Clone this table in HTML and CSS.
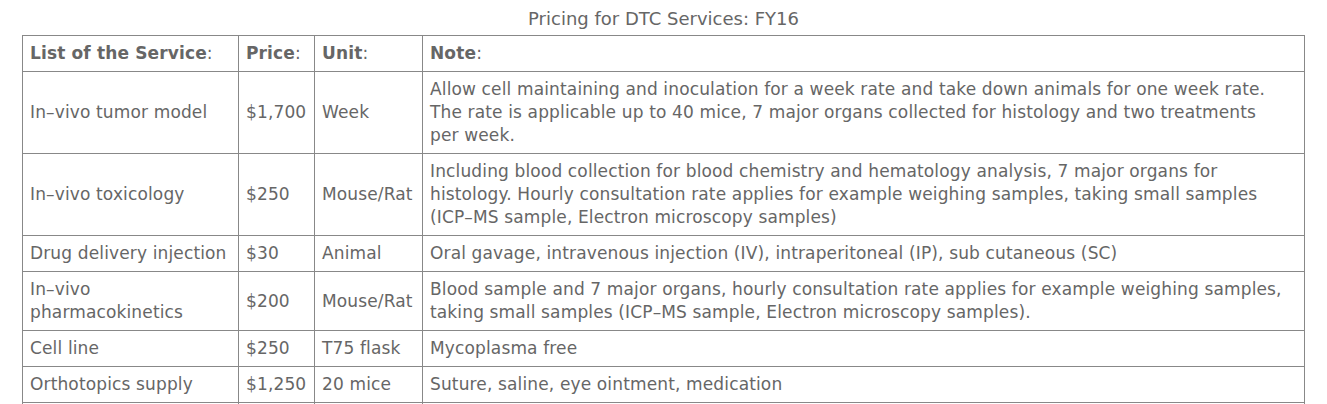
FILE: index.html
```html
<!DOCTYPE html>
<html>
<head>
<meta charset="utf-8">
<title>Pricing for DTC Services: FY16</title>
<link rel="stylesheet" href="styles.css">
</head>
<body>
<div class="page">
  <div class="title">Pricing for DTC Services: FY16</div>
  <table class="pricing">
    <colgroup>
      <col class="c-service">
      <col class="c-price">
      <col class="c-unit">
      <col class="c-note">
    </colgroup>
    <thead>
      <tr>
        <th><b>List of the Service</b>:</th>
        <th><b>Price</b>:</th>
        <th><b>Unit</b>:</th>
        <th><b>Note</b>:</th>
      </tr>
    </thead>
    <tbody>
      <tr>
        <td>In–vivo tumor model</td>
        <td>$1,700</td>
        <td>Week</td>
        <td>Allow cell maintaining and inoculation for a week rate and take down animals for one week rate. The rate is applicable up to 40 mice, 7 major organs collected for histology and two treatments per week.</td>
      </tr>
      <tr>
        <td>In–vivo toxicology</td>
        <td>$250</td>
        <td>Mouse/Rat</td>
        <td>Including blood collection for blood chemistry and hematology analysis, 7 major organs for histology. Hourly consultation rate applies for example weighing samples, taking small samples (ICP–MS sample, Electron microscopy samples)</td>
      </tr>
      <tr>
        <td>Drug delivery injection</td>
        <td>$30</td>
        <td>Animal</td>
        <td>Oral gavage, intravenous injection (IV), intraperitoneal (IP), sub cutaneous (SC)</td>
      </tr>
      <tr>
        <td>In–vivo pharmacokinetics</td>
        <td>$200</td>
        <td>Mouse/Rat</td>
        <td>Blood sample and 7 major organs, hourly consultation rate applies for example weighing samples, taking small samples (ICP–MS sample, Electron microscopy samples).</td>
      </tr>
      <tr>
        <td>Cell line</td>
        <td>$250</td>
        <td>T75 flask</td>
        <td>Mycoplasma free</td>
      </tr>
      <tr>
        <td>Orthotopics supply</td>
        <td>$1,250</td>
        <td>20 mice</td>
        <td>Suture, saline, eye ointment, medication</td>
      </tr>
      <tr>
        <td>&nbsp;</td>
        <td>&nbsp;</td>
        <td>&nbsp;</td>
        <td>&nbsp;</td>
      </tr>
    </tbody>
  </table>
</div>
</body>
</html>
```

FILE: styles.css
```css
html, body {
  margin: 0;
  padding: 0;
  background: #ffffff;
}

body {
  font-family: "DejaVu Sans", "Noto Sans", sans-serif;
  font-size: 17px;
  letter-spacing: 0.14px;
  color: #666666;
}

.page {
  padding: 8px 22px 0 22px;
}

.title {
  text-align: center;
  font-size: 18px;
  letter-spacing: 0;
  line-height: 22px;
  height: 27px;
  color: #666666;
}

.pricing {
  width: 100%;
  border-collapse: collapse;
  border: 1px solid #333333;
  table-layout: fixed;
}

.c-service { width: 216px; }
.c-price { width: 76px; }
.c-unit { width: 108px; }

.pricing th,
.pricing td {
  border: 1px solid #888888;
  padding: 6px 7px 6px 7px;
  line-height: 23px;
  text-align: left;
  vertical-align: middle;
  font-weight: normal;
  color: #666666;
}

.pricing th:last-child,
.pricing td:last-child {
  padding-right: 16px;
}

.pricing th b {
  font-weight: bold;
}
```
